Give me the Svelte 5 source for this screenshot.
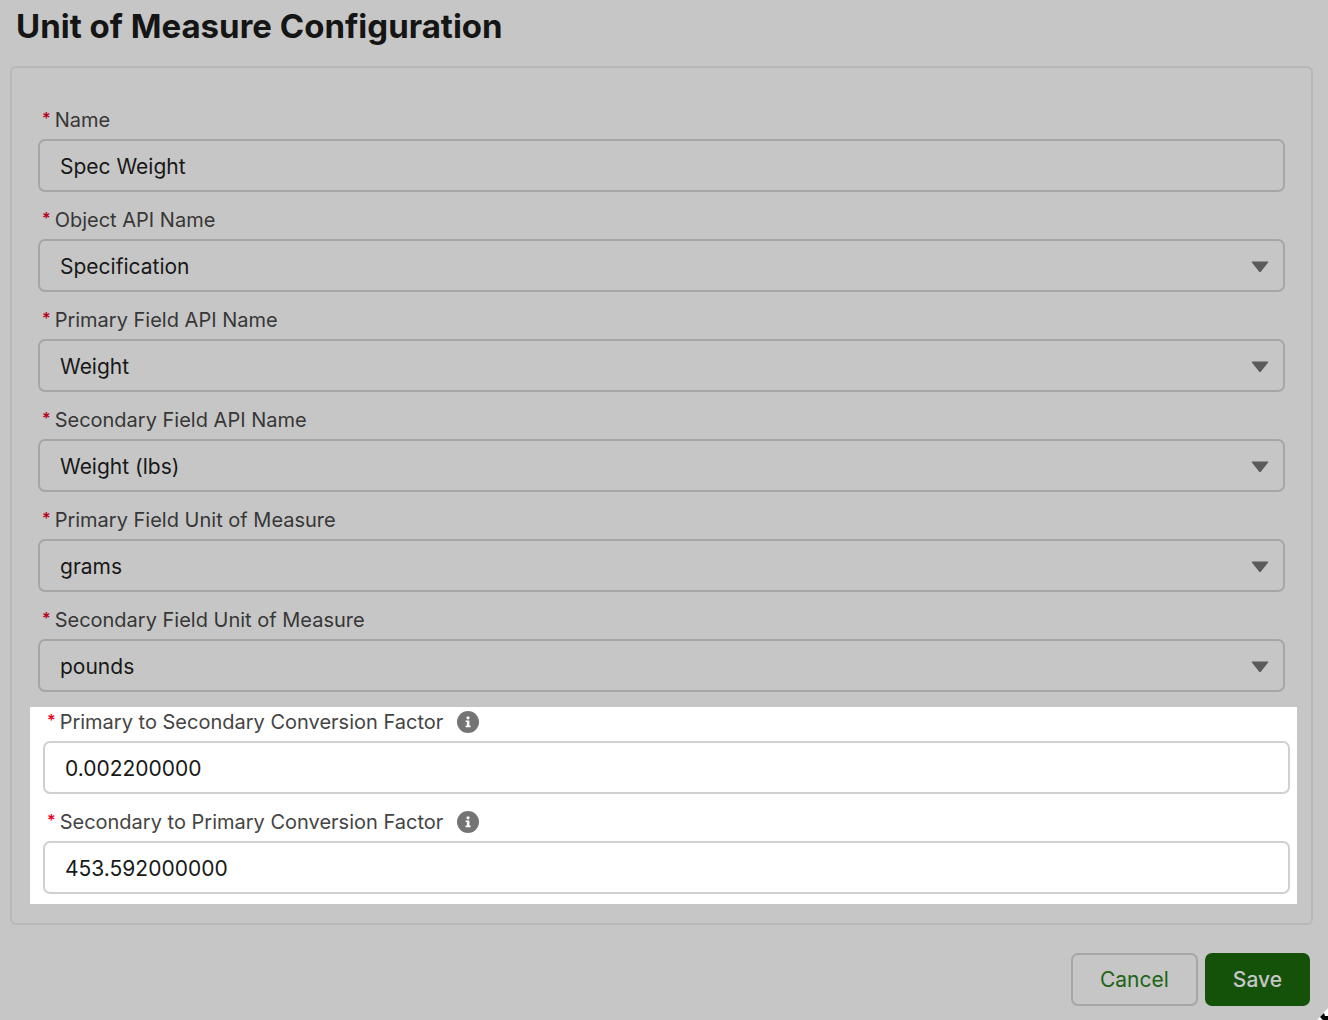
<script>
  // State
  let name = 'Spec Weight';
  let primaryFactor = '0.002200000';
  let secondaryFactor = '453.592000000';

  let selects = [
    { id: 'object-name', label: 'Object API Name', value: 'Specification' },
    { id: 'primary-field', label: 'Primary Field API Name', value: 'Weight' },
    { id: 'secondary-field', label: 'Secondary Field API Name', value: 'Weight (lbs)' },
    { id: 'primary-unit', label: 'Primary Field Unit of Measure', value: 'grams' },
    { id: 'secondary-unit', label: 'Secondary Field Unit of Measure', value: 'pounds' }
  ];
</script>

{#snippet infoIcon()}
  <button type="button" class="info" aria-label="Help">
    <svg viewBox="0 0 22 22" width="22" height="22" aria-hidden="true">
      <circle cx="11" cy="11" r="11" fill="#747474" />
      <circle cx="11" cy="6.8" r="1.6" fill="#fff" />
      <path d="M8.6 9.4h3.8v5.2h1.2v1.6H8.6v-1.6h1.3V11H8.6z" fill="#fff" />
    </svg>
  </button>
{/snippet}

<form class="config" on:submit|preventDefault>
  <h1>Unit of Measure Configuration</h1>

  <div class="card">
    <div class="fields">
      <div class="field">
        <div class="label-row">
          <label for="name"><span class="required">*</span>Name</label>
        </div>
        <input id="name" type="text" bind:value={name} />
      </div>

      {#each selects as field (field.id)}
        <div class="field">
          <div class="label-row">
            <label for={field.id}><span class="required">*</span>{field.label}</label>
          </div>
          <div class="select-wrap">
            <select id={field.id} bind:value={field.value}>
              <option value={field.value}>{field.value}</option>
            </select>
            <svg class="arrow" viewBox="0 0 18 12" width="18" height="12" aria-hidden="true">
              <path d="M1.4.6h15.2q1.2 0 .5 1L9.8 10.8q-.8.9-1.6 0L.9 1.6q-.7-1 .5-1z" fill="#5b5b5b" />
            </svg>
          </div>
        </div>
      {/each}
    </div>

    <div class="highlight">
      <div class="field">
        <div class="label-row">
          <label for="primary-factor"><span class="required">*</span>Primary to Secondary Conversion Factor</label>
          {@render infoIcon()}
        </div>
        <input id="primary-factor" type="text" bind:value={primaryFactor} />
      </div>

      <div class="field">
        <div class="label-row">
          <label for="secondary-factor"><span class="required">*</span>Secondary to Primary Conversion Factor</label>
          {@render infoIcon()}
        </div>
        <input id="secondary-factor" type="text" bind:value={secondaryFactor} />
      </div>
    </div>
  </div>

  <div class="actions">
    <button type="button" class="cancel">Cancel</button>
    <button type="submit" class="save">Save</button>
  </div>

  <svg class="pointer" viewBox="0 0 12 12" width="12" height="12" aria-hidden="true">
    <path d="M1 12L12 0v12z" fill="#fff" />
    <path d="M4 9l4-4 1 3h3v4H7z" fill="#000" />
  </svg>
</form>

<style>
  :global(body) {
    background-color: #c6c6c6;
  }

  .config {
    position: relative;
    min-height: 100vh;
    box-sizing: border-box;
    padding: 4px 15px 13px 10px;
    overflow: hidden;
    font-family: Inter, "Liberation Sans", sans-serif;
    color: #181818;
  }

  h1 {
    margin: 0 6px 18px;
    font-size: 33px;
    line-height: 44px;
    font-weight: 700;
    color: #151515;
  }

  .card {
    border: 2px solid #b8b8b8;
    border-radius: 6px;
    padding: 24px 14px 19px 18px;
  }

  .fields {
    padding: 0 12px 15px 8px;
  }

  .field {
    display: flex;
    flex-direction: column;
  }

  .label-row {
    display: flex;
    align-items: center;
    gap: 14px;
    height: 28px;
    padding: 14px 4px 5px;
  }

  label {
    display: flex;
    gap: 4px;
    font-size: 20px;
    line-height: 28px;
    color: #373737;
  }

  .required {
    font-size: 16px;
    line-height: 24px;
    font-weight: 600;
    color: #b8001c;
  }

  input,
  select {
    width: 100%;
    height: 53px;
    box-sizing: border-box;
    margin: 0;
    padding: 2px 20px 0;
    border: 2px solid #a6a6a6;
    border-radius: 7px;
    background-color: transparent;
    font-family: inherit;
    font-size: 21px;
    color: #181818;
    appearance: none;
    outline: none;
  }

  .select-wrap {
    position: relative;
  }

  .arrow {
    position: absolute;
    right: 16px;
    top: 22px;
    pointer-events: none;
  }

  .highlight {
    padding: 0 7px 10px 13px;
    background-color: #fff;
  }

  .highlight .field:first-child .label-row {
    padding-top: 1px;
  }

  .highlight label {
    color: #444;
  }

  .highlight .required {
    color: #ea001e;
  }

  .highlight input {
    border-color: #d0d0d0;
  }

  .info {
    display: flex;
    padding: 0;
    border: none;
    background: none;
    cursor: pointer;
  }

  .actions {
    display: flex;
    justify-content: flex-end;
    gap: 7px;
    padding: 28px 3px 0;
  }

  .actions button {
    height: 53px;
    padding: 0 27px;
    border: 2px solid #a6a6a6;
    border-radius: 7px;
    font-family: inherit;
    font-size: 21px;
    cursor: pointer;
  }

  .actions .cancel {
    background-color: transparent;
    color: #1f6415;
  }

  .actions .save {
    padding: 0 26px;
    border-color: #14520a;
    background-color: #14520a;
    color: #c6c6c6;
    font-weight: 500;
  }

  .pointer {
    position: absolute;
    right: 0;
    bottom: 0;
  }
</style>
